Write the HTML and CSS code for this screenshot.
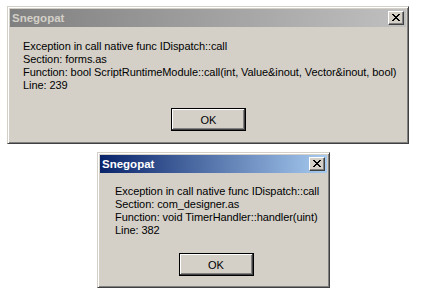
FILE: index.html
```html
<!DOCTYPE html>
<html lang="en">
<head>
    <meta charset="UTF-8">
    <meta name="viewport" content="width=device-width, initial-scale=1.0">
    <title>Snegopat</title>
    <link rel="stylesheet" href="styles.css">
</head>
<body>
    <div class="dialog dialog-first inactive">
        <div class="titlebar">
            <span class="title">Snegopat</span>
            <span class="close-btn">
                <svg width="8" height="7" viewBox="0 0 8 7" shape-rendering="crispEdges"><path d="M0 0h2v1H0zM6 0h2v1H6zM1 1h2v1H1zM5 1h2v1H5zM2 2h4v1H2zM3 3h2v1H3zM2 4h4v1H2zM1 5h2v1H1zM5 5h2v1H5zM0 6h2v1H0zM6 6h2v1H6z" fill="#000"/></svg>
            </span>
        </div>
        <div class="content">
            <div class="message">
                <div>Exception in call native func IDispatch::call</div>
                <div>Section: forms.as</div>
                <div>Function: bool ScriptRuntimeModule::call(int, Value&amp;inout, Vector&amp;inout, bool)</div>
                <div>Line: 239</div>
            </div>
            <div class="actions">
                <button class="btn">OK</button>
            </div>
        </div>
    </div>

    <div class="dialog dialog-second">
        <div class="titlebar">
            <span class="title">Snegopat</span>
            <span class="close-btn">
                <svg width="8" height="7" viewBox="0 0 8 7" shape-rendering="crispEdges"><path d="M0 0h2v1H0zM6 0h2v1H6zM1 1h2v1H1zM5 1h2v1H5zM2 2h4v1H2zM3 3h2v1H3zM2 4h4v1H2zM1 5h2v1H1zM5 5h2v1H5zM0 6h2v1H0zM6 6h2v1H6z" fill="#000"/></svg>
            </span>
        </div>
        <div class="content">
            <div class="message">
                <div>Exception in call native func IDispatch::call</div>
                <div>Section: com_designer.as</div>
                <div>Function: void TimerHandler::handler(uint)</div>
                <div>Line: 382</div>
            </div>
            <div class="actions">
                <button class="btn">OK</button>
            </div>
        </div>
    </div>
</body>
</html>
```

FILE: styles.css
```css
body {
    margin: 0;
    background-color: #ffffff;
    font-family: 'Liberation Sans', Arial, sans-serif;
    font-size: 11px;
    color: #000000;
}

.dialog {
    box-sizing: border-box;
    background-color: #d4d0c8;
    border: 1px solid;
    border-color: #d4d0c8 #404040 #404040 #d4d0c8;
    box-shadow: inset 1px 1px #ffffff, inset -1px -1px #808080;
    padding: 2px;
}

.dialog-first {
    width: 402px;
    margin: 6px 0 0 7px;
}

.dialog-second {
    width: 233px;
    margin: 8px 0 0 97px;
}

.titlebar {
    height: 18px;
    display: flex;
    align-items: center;
    justify-content: space-between;
    padding: 0 2px 0 2px;
    background: linear-gradient(to right, #0a246a, #a6caf0);
}

.inactive .titlebar {
    background: linear-gradient(to right, #808080, #c0c0c0);
}

.title {
    font-weight: bold;
    font-size: 11.5px;
    color: #ffffff;
}

.inactive .title {
    color: #d4d0c8;
}

.close-btn {
    box-sizing: border-box;
    width: 16px;
    height: 14px;
    display: flex;
    align-items: center;
    justify-content: center;
    background-color: #d4d0c8;
    border: 1px solid;
    border-color: #ffffff #404040 #404040 #ffffff;
    box-shadow: inset -1px -1px #808080;
    padding: 0 1px 1px 0;
}

.close-btn svg {
    display: block;
}

.content {
    padding: 13px 10px 10px 13px;
}

.dialog-second .content {
    padding: 12px 8px 9px 15px;
}

.message {
    line-height: 13px;
    letter-spacing: -0.07px;
    white-space: nowrap;
}

.actions {
    display: flex;
    justify-content: center;
    margin-top: 16px;
}

.btn {
    box-sizing: border-box;
    width: 75px;
    height: 23px;
    margin-right: 2px;
    background-color: #d4d0c8;
    border: 1px solid #000000;
    box-shadow: inset -1px -1px #404040, inset 1px 1px #ffffff, inset -2px -2px #808080;
    font-family: 'Liberation Sans', Arial, sans-serif;
    font-size: 11px;
    color: #000000;
    padding: 0;
}
```
